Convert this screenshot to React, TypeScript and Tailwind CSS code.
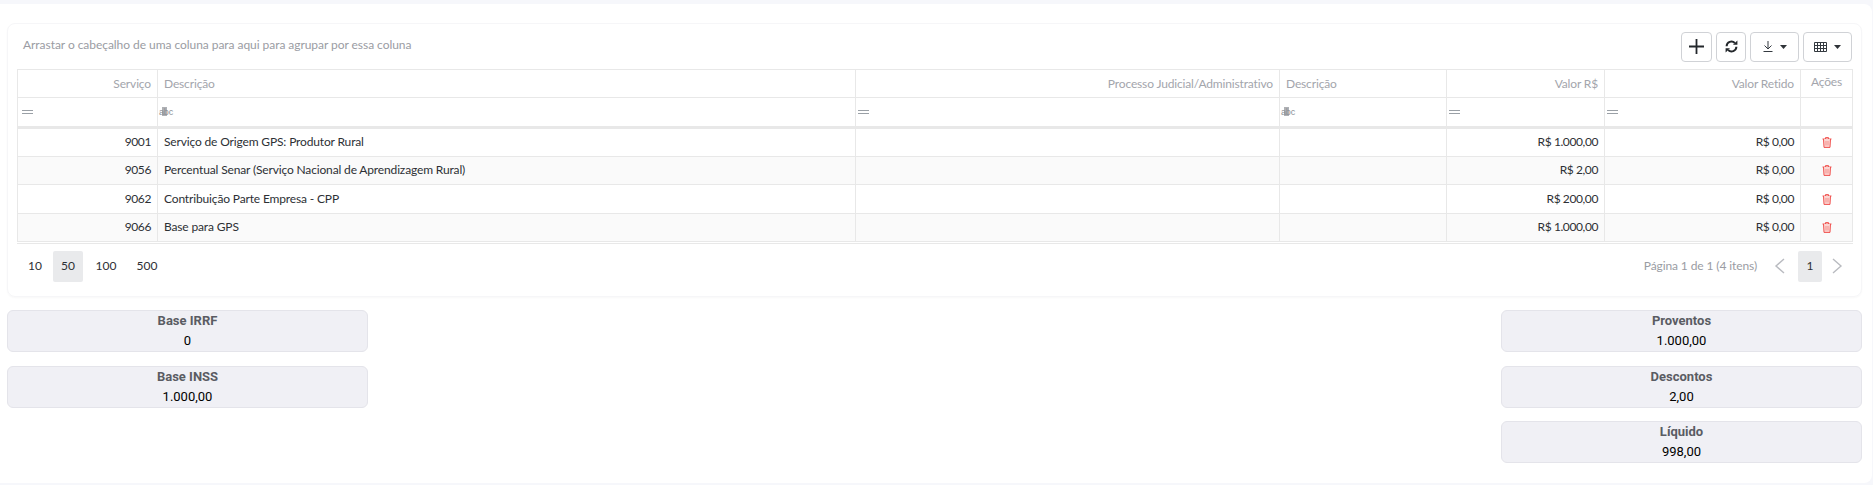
import React from 'react';

const rows = [
  { code: '9001', desc: 'Serviço de Origem GPS: Produtor Rural', valor: 'R$ 1.000,00' },
  { code: '9056', desc: 'Percentual Senar (Serviço Nacional de Aprendizagem Rural)', valor: 'R$ 2,00' },
  { code: '9062', desc: 'Contribuição Parte Empresa - CPP', valor: 'R$ 200,00' },
  { code: '9066', desc: 'Base para GPS', valor: 'R$ 1.000,00' },
];

const EqualIcon = () => (
  <svg width="11" height="5" viewBox="0 0 11 5" className="block">
    <path d="M0 .5h11M0 3.5h11" stroke="#9aa0a6" strokeWidth="1" />
  </svg>
);

const AbcIcon = () => (
  <span className="relative block h-[12px] w-[13px] font-['Liberation_Sans',sans-serif] text-[9px] leading-[12px] text-[#8d9096]">
    abc
    <span className="absolute left-[3px] top-[1px] h-[9px] w-[5px] bg-[#8d9096]/70" />
  </span>
);

const TrashIcon = () => (
  <svg width="10" height="11" viewBox="0 0 10 11" fill="none" stroke="#f0524f" strokeWidth="1" className="mx-auto block">
    <path d="M.5 2h9M3.5 2V.6h3V2" />
    <path d="M1.5 2l.5 8.4h6l.5-8.4" fill="#fbd5d2" />
    <path d="M4 4v4.5M6 4v4.5" stroke="#f58f8a" />
  </svg>
);

const Caret = () => (
  <svg width="7" height="4" viewBox="0 0 7 4" className="block">
    <path d="M0 0h7L3.5 4z" fill="#2f3338" />
  </svg>
);

const StatBox = ({ label, value }: { label: string; value: string }) => (
  <div className="flex h-[42px] w-[361px] flex-col items-center rounded-[6px] border border-[#e4e4ea] bg-[#f0f0f5] font-['Roboto',sans-serif] text-[13px] leading-[20px]">
    <span className="font-bold text-[#5a5c63]">{label}</span>
    <span className="font-normal text-black">{value}</span>
  </div>
);

const ToolButton = ({ width, children }: { width: string; children: React.ReactNode }) => (
  <button className={`flex h-[30px] items-center justify-center gap-[7px] rounded-[4px] border border-[#d0d2d6] bg-white ${width}`}>
    {children}
  </button>
);

export default function App() {
  return (
    <div className="h-[485px] w-[1873px] overflow-hidden bg-[#f6f7fb] pt-[4px] font-['Lato',sans-serif] text-[12px]">
      <div className="h-[479px] w-[1872px] rounded-r-[8px] bg-white pl-[7px] pr-[10px] pt-[19px]">
        {/* Grid card */}
        <div className="h-[274px] w-[1855px] rounded-[8px] border border-[#f6f6f8] px-[9px] pt-[7px] shadow-[0_1px_2px_rgba(0,0,0,0.03)]">
          <div className="flex h-[31px] items-center justify-between">
            <span className="pb-[3px] pl-[6px] tracking-[-0.05px] text-[#9a9ca3]">Arrastar o cabeçalho de uma coluna para aqui para agrupar por essa coluna</span>
            <div className="flex gap-[4px]">
              <ToolButton width="w-[31px]">
                <svg width="17" height="17" viewBox="0 0 17 17"><path d="M8.5 1v15M1 8.5h15" stroke="#23272b" strokeWidth="1.8" /></svg>
              </ToolButton>
              <ToolButton width="w-[30px]">
                <svg width="13" height="13" viewBox="0 0 13 13" fill="none">
                  <path d="M1.6 6.2a4.8 4.8 0 0 1 8.2-3.2M11.4 6.8a4.8 4.8 0 0 1-8.2 3.2" stroke="#23272b" strokeWidth="2" />
                  <path d="M8 4.8h4.4V.4zM5 8.2H.6v4.4z" fill="#23272b" />
                </svg>
              </ToolButton>
              <ToolButton width="w-[49px]">
                <svg width="10" height="11" viewBox="0 0 10 11" fill="none" stroke="#343a40" strokeWidth="1">
                  <path d="M5 0v7.5M1.5 4.5 5 8l3.5-3.5M.5 10.5h9" />
                </svg>
                <Caret />
              </ToolButton>
              <ToolButton width="w-[49px]">
                <svg width="13" height="10" viewBox="0 0 13 10" fill="none" stroke="#343a40" strokeWidth="1">
                  <path d="M.5 .5h12v9H.5zM.5 3.5h12M.5 6.5h12M3.5 .5v9M6.5 .5v9M9.5 .5v9" />
                </svg>
                <Caret />
              </ToolButton>
            </div>
          </div>

          <table className="mt-[7px] w-[1835px] table-fixed border-collapse border-b-[3px] border-double border-[#e8e8e8]">
            <colgroup>
              <col className="w-[140px]" />
              <col className="w-[698px]" />
              <col className="w-[424px]" />
              <col className="w-[167px]" />
              <col className="w-[158px]" />
              <col className="w-[196px]" />
              <col className="w-[52px]" />
            </colgroup>
            <thead className="tracking-[-0.15px] text-[#a3a5ac]">
              <tr className="h-[28px]">
                <th className="border border-[#e8e8e8] px-[6px] text-right font-normal">Serviço</th>
                <th className="border border-[#e8e8e8] px-[6px] text-left font-normal">Descrição</th>
                <th className="border border-[#e8e8e8] px-[6px] text-right font-normal">Processo Judicial/Administrativo</th>
                <th className="border border-[#e8e8e8] px-[6px] text-left font-normal">Descrição</th>
                <th className="border border-[#e8e8e8] px-[6px] text-right font-normal">Valor R$</th>
                <th className="border border-[#e8e8e8] px-[6px] text-right font-normal">Valor Retido</th>
                <th className="border border-[#e8e8e8] px-[6px] pb-[3px] text-center font-normal">Ações</th>
              </tr>
              <tr className="h-[30px] border-b-[3px] border-[#e8e8e8]">
                <td className="border-x border-[#e8e8e8] pl-[4px]"><EqualIcon /></td>
                <td className="border-x border-[#e8e8e8] pl-[1px]"><AbcIcon /></td>
                <td className="border-x border-[#e8e8e8] pl-[2px]"><EqualIcon /></td>
                <td className="border-x border-[#e8e8e8] pl-[1px]"><AbcIcon /></td>
                <td className="border-x border-[#e8e8e8] pl-[2px]"><EqualIcon /></td>
                <td className="border-x border-[#e8e8e8] pl-[2px]"><EqualIcon /></td>
                <td className="border-x border-[#e8e8e8]" />
              </tr>
            </thead>
            <tbody className="text-[#2d3035]">
              {rows.map((row, i) => (
                <tr key={row.code} className={`h-[28.67px] border-b border-[#e8e8e8] ${i % 2 ? 'bg-[#fafafa]' : 'bg-white'}`}>
                  <td className="border-x border-[#e8e8e8] px-[6px] text-right tracking-[-0.4px]">{row.code}</td>
                  <td className="border-x border-[#e8e8e8] px-[6px] tracking-[-0.15px]">{row.desc}</td>
                  <td className="border-x border-[#e8e8e8]" />
                  <td className="border-x border-[#e8e8e8]" />
                  <td className="border-x border-[#e8e8e8] px-[6px] text-right tracking-[-0.4px]">{row.valor}</td>
                  <td className="border-x border-[#e8e8e8] px-[6px] text-right tracking-[-0.4px]">R$ 0,00</td>
                  <td className="border-x border-[#e8e8e8]"><TrashIcon /></td>
                </tr>
              ))}
            </tbody>
          </table>

          {/* Pager */}
          <div className="mt-[7px] flex h-[31px] items-center justify-between text-[#2d3035]">
            <div className="flex items-center">
              <span className="flex h-[31px] w-[36px] items-center justify-center">10</span>
              <span className="flex h-[31px] w-[30px] items-center justify-center rounded-[2px] bg-[#e9eaec]">50</span>
              <span className="flex h-[31px] w-[46px] items-center justify-center">100</span>
              <span className="flex h-[31px] w-[36px] items-center justify-center">500</span>
            </div>
            <div className="flex items-center">
              <span className="mr-[17px] tracking-[-0.1px] text-[#9a9ca3]">Página 1 de 1 (4 itens)</span>
              <svg width="11" height="16" viewBox="0 0 11 16" fill="none" stroke="#b9bbc0" strokeWidth="1.4"><path d="M10 1 2 8l8 7" /></svg>
              <span className="ml-[13px] mr-[10px] flex h-[31px] w-[24px] items-center justify-center rounded-[2px] bg-[#e9eaec]">1</span>
              <svg width="11" height="16" viewBox="0 0 11 16" fill="none" stroke="#b9bbc0" strokeWidth="1.4"><path d="m1 1 8 7-8 7" /></svg>
              <span className="w-[9px]" />
            </div>
          </div>
        </div>

        {/* Totals */}
        <div className="mt-[13px] flex w-[1855px] justify-between">
          <div className="flex flex-col gap-[13.5px]">
            <StatBox label="Base IRRF" value="0" />
            <StatBox label="Base INSS" value="1.000,00" />
          </div>
          <div className="flex flex-col gap-[13.5px]">
            <StatBox label="Proventos" value="1.000,00" />
            <StatBox label="Descontos" value="2,00" />
            <StatBox label="Líquido" value="998,00" />
          </div>
        </div>
      </div>
    </div>
  );
}
